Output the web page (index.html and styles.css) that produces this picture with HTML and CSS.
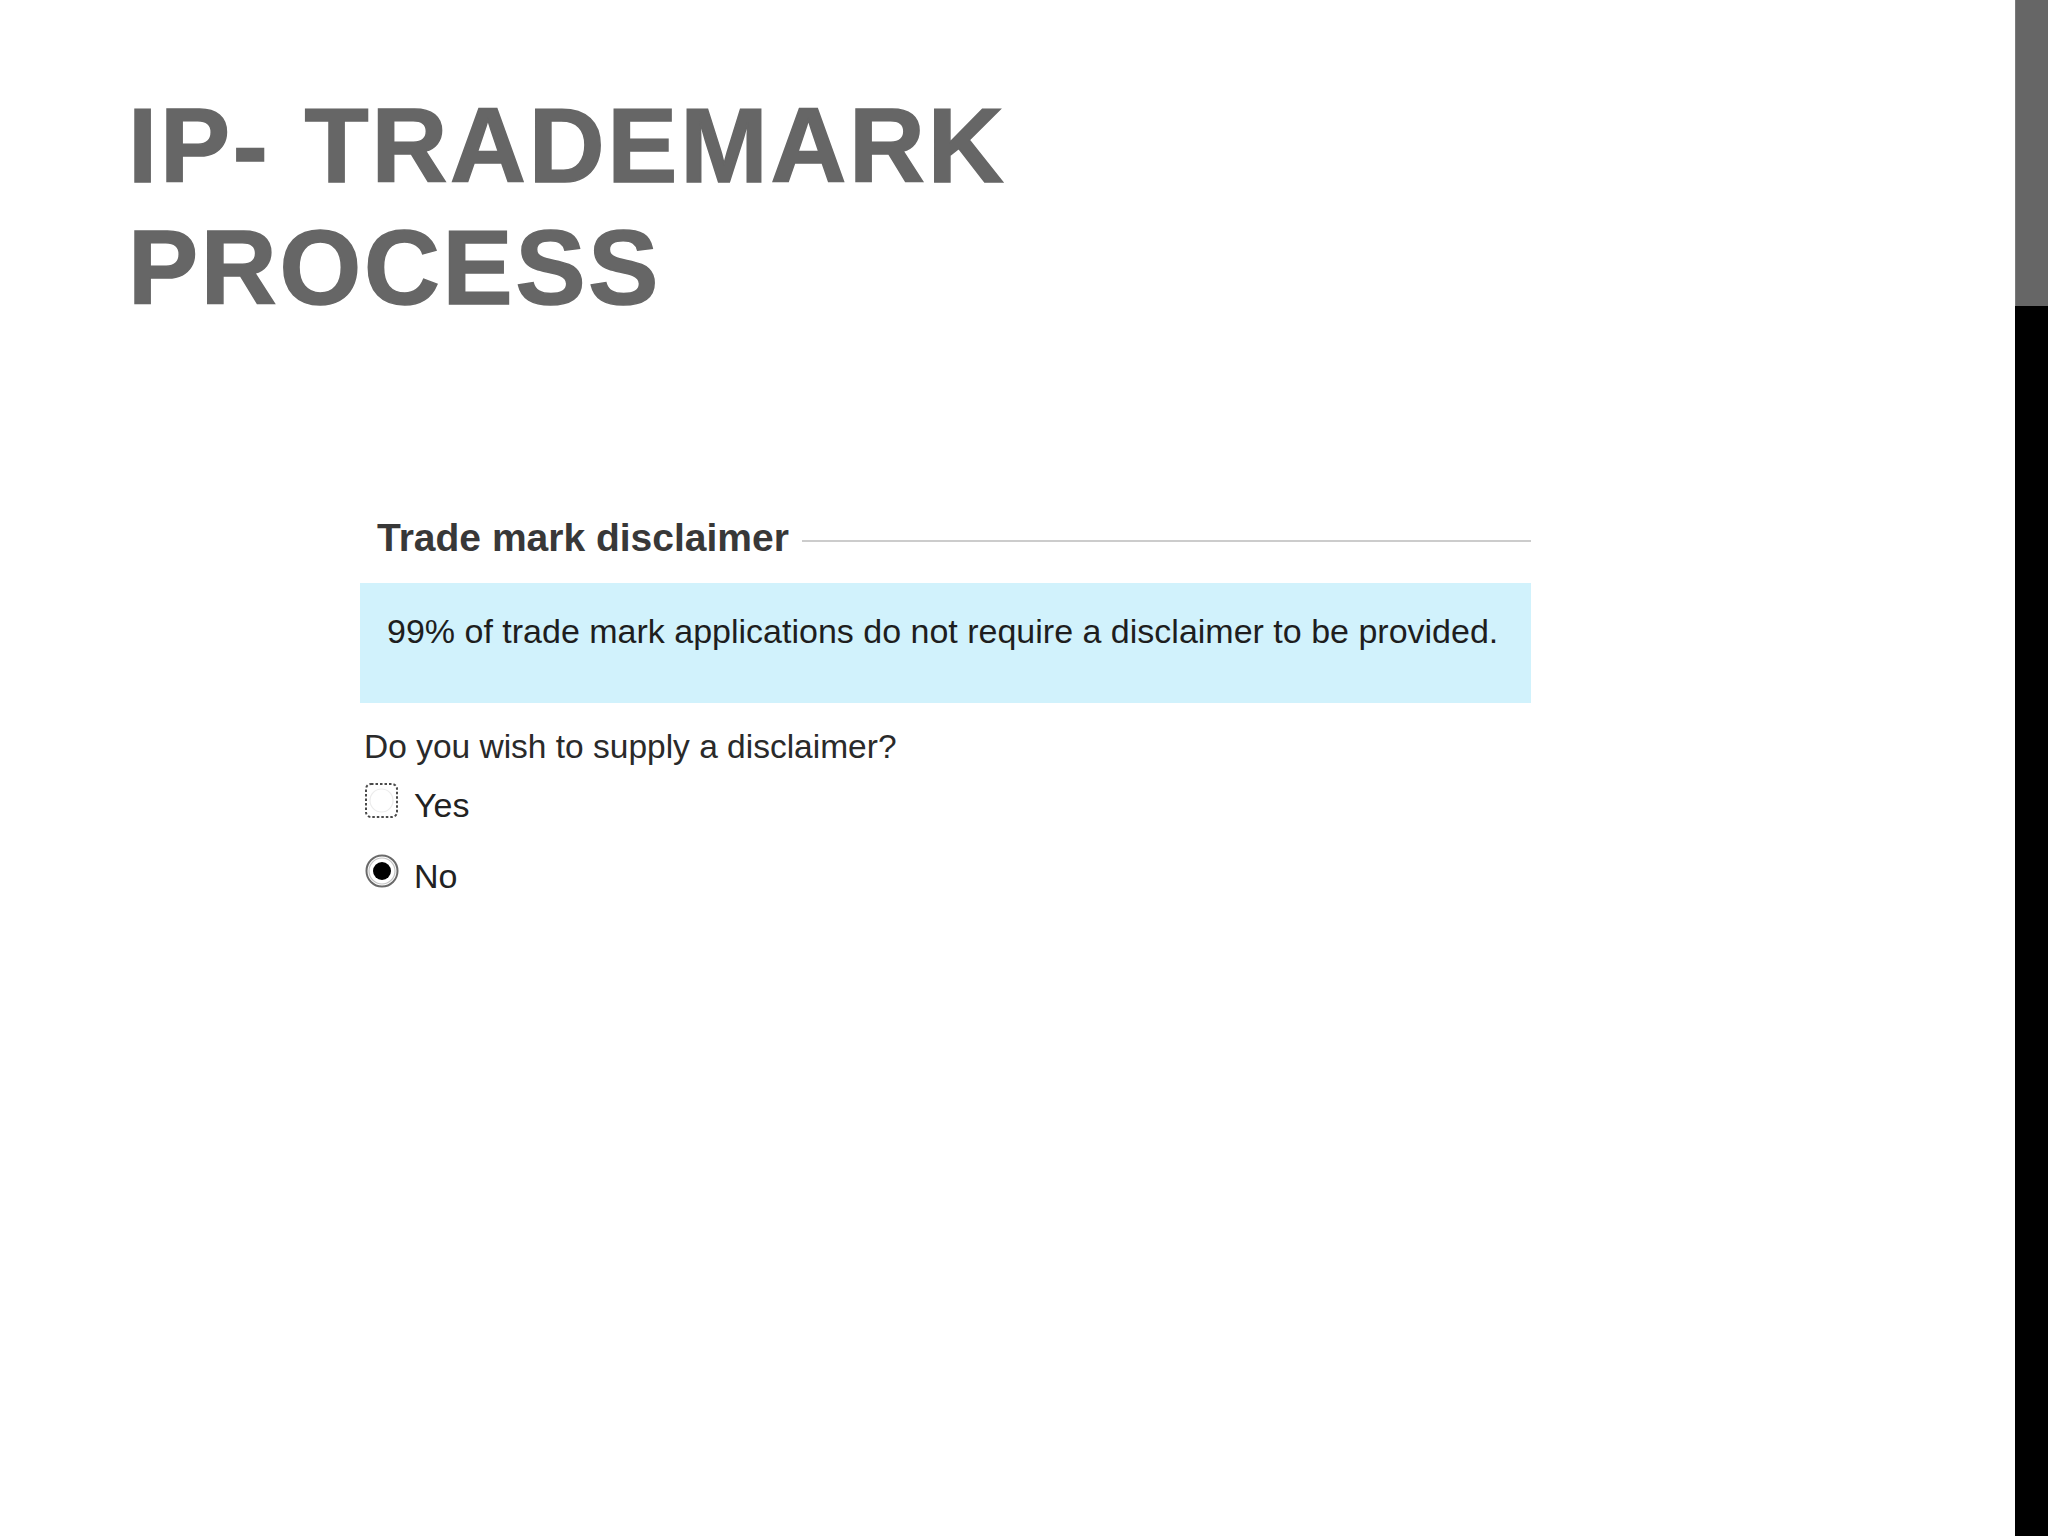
FILE: index.html
```html
<!DOCTYPE html>
<html lang="en">
<head>
<meta charset="utf-8">
<title>IP- Trademark Process</title>
<link rel="stylesheet" href="styles.css">
</head>
<body>
<div class="slide">
  <main class="content">
    <h1 class="title">IP- TRADEMARK<br>PROCESS</h1>
    <section class="form">
      <div class="legend">
        <span class="legend-text">Trade mark disclaimer</span>
        <span class="legend-line"></span>
      </div>
      <div class="info">99% of trade mark applications do not require a disclaimer to be provided.</div>
      <p class="question">Do you wish to supply a disclaimer?</p>
      <div class="option">
        <svg class="radio" width="34" height="36" viewBox="0 0 34 36">
          <rect x="1" y="1" width="31" height="33" rx="5" fill="none" stroke="#4a4a4a" stroke-width="2" stroke-dasharray="2.5 2"/>
          <circle cx="16.5" cy="17.5" r="11.5" fill="#fff" stroke="#ececec" stroke-width="1.2"/>
        </svg>
        <span class="label">Yes</span>
      </div>
      <div class="option option-no">
        <svg class="radio" width="34" height="34" viewBox="0 0 34 34">
          <circle cx="17" cy="17" r="15.5" fill="#fff" stroke="#6a6a6a" stroke-width="2"/>
          <circle cx="17" cy="17" r="13" fill="none" stroke="#c4c4c4" stroke-width="1.2"/>
          <circle cx="17" cy="17" r="9" fill="#000"/>
        </svg>
        <span class="label">No</span>
      </div>
    </section>
  </main>
  <aside class="sidebar">
    <div class="sidebar-top"></div>
    <div class="sidebar-bottom"></div>
  </aside>
</div>
</body>
</html>
```

FILE: styles.css
```css
html, body {
  margin: 0;
  padding: 0;
  background: #ffffff;
}

.slide {
  display: flex;
  width: 2048px;
  height: 1536px;
  overflow: hidden;
}

.content {
  flex: 1;
  padding-left: 128px;
  padding-top: 85px;
}

.title {
  margin: 0;
  font-family: "Liberation Sans", Arial, sans-serif;
  font-weight: 700;
  font-size: 105px;
  line-height: 122px;
  letter-spacing: 2.8px;
  word-spacing: 2px;
  color: #666666;
  -webkit-text-stroke: 1.5px #666666;
}

.form {
  margin-top: 186px;
  margin-left: 232px;
  width: 1171px;
  font-family: "Liberation Sans", Arial, sans-serif;
}

.legend {
  display: flex;
  align-items: center;
  height: 46px;
}

.legend-text {
  padding-left: 17px;
  font-size: 39px;
  font-weight: 700;
  line-height: 46px;
  color: #383838;
  white-space: nowrap;
}

.legend-line {
  flex: 1;
  height: 2px;
  margin-left: 13px;
  margin-top: 5px;
  background: #cccccc;
}

.info {
  margin-top: 22px;
  height: 120px;
  box-sizing: border-box;
  padding: 28px 27px 0;
  background: #d1f2fc;
  font-size: 34px;
  line-height: 40px;
  color: #1e1e1e;
  white-space: nowrap;
}

.question {
  margin: 24px 0 0 4px;
  font-size: 33.5px;
  line-height: 40px;
  color: #2a2a2a;
}

.option {
  display: flex;
  align-items: flex-start;
  height: 40px;
  margin-top: 18px;
  margin-left: 5px;
}

.option-no {
  margin-top: 31px;
}

.radio {
  margin-top: -2px;
  flex: none;
}

.label {
  margin-left: 15px;
  font-size: 34px;
  line-height: 40px;
  color: #222222;
}

.sidebar {
  width: 33px;
  flex: none;
  display: flex;
  flex-direction: column;
}

.sidebar-top {
  height: 306px;
  background: #666666;
  border-left: 1px solid #7a7a7a;
}

.sidebar-bottom {
  flex: 1;
  background: #000000;
}
```
